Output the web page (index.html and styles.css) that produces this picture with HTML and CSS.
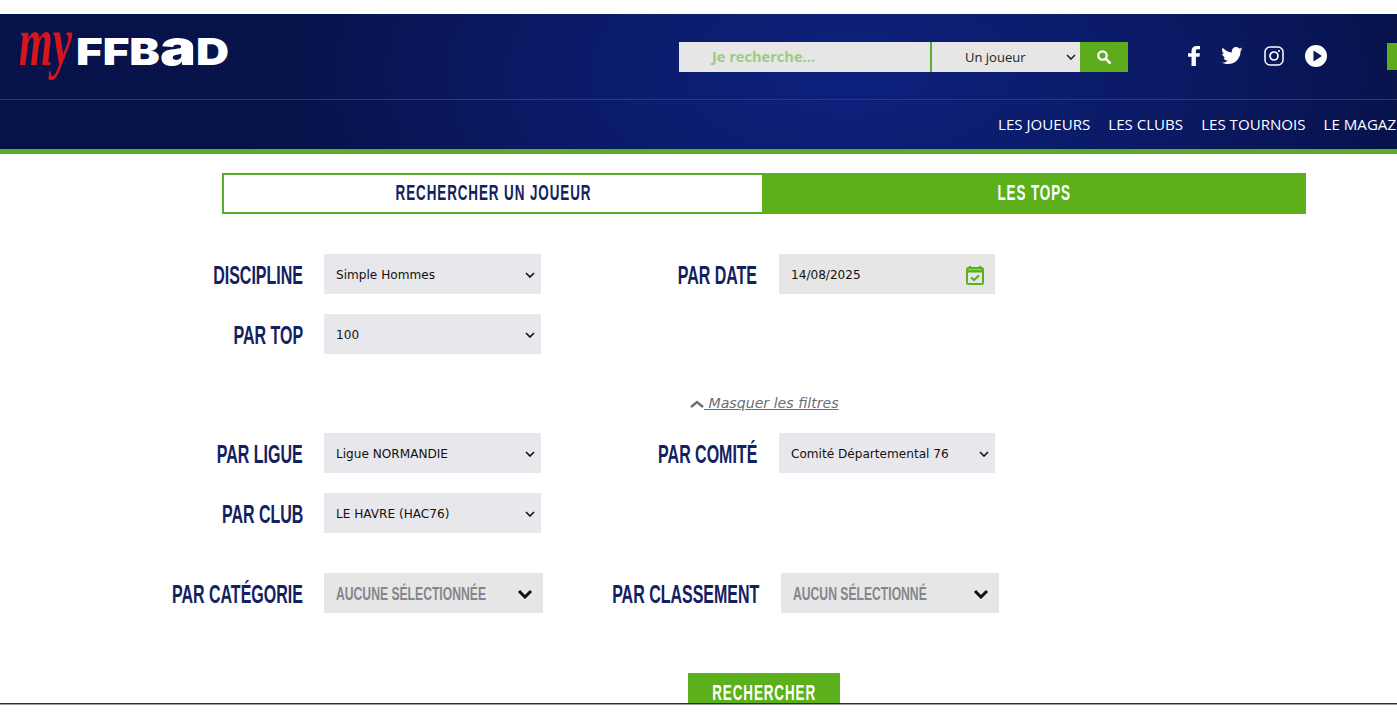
FILE: index.html
```html
<!DOCTYPE html>
<html>
<head>
  <title>MyFFBaD</title>
  <link rel="stylesheet" href="styles.css">
</head>
<body>

  <header class="site-header">
    <div class="header-top">
      <a class="logo" href="#">
        <span class="logo-my"><span>my</span></span>
        <span class="logo-name">FFB<span class="logo-a">a</span>D</span>
      </a>
      <form class="search-bar">
        <div class="search-input">Je recherche...</div>
        <div class="search-type">
          <span>Un joueur</span>
          <svg width="10" height="6" viewBox="0 0 10 6"><path d="M1 1l4 4 4-4" fill="none" stroke="#222" stroke-width="1.6"/></svg>
        </div>
        <div class="search-btn">
          <svg width="16" height="16" viewBox="0 0 16 16"><circle cx="6.5" cy="6.5" r="4.2" fill="none" stroke="#fff" stroke-width="2.2"/><path d="M9.8 9.8L14.5 14.5" stroke="#fff" stroke-width="2.6"/></svg>
        </div>
      </form>
      <div class="socials">
        <svg width="12" height="20" viewBox="1 .4 10.2 19.6" preserveAspectRatio="none"><path d="M4 20V11H1V7.6h3V5c0-3 1.800-4.600 4.500-4.600 1.300 0 2.400.1 2.700.1v3.100H9.400C8 3.600 7.700 4.300 7.700 5.300v2.300h3.500L10.700 11h-3v9z" fill="#fff"/></svg>
        <svg width="22" height="18" viewBox="0 0 24 20"><path d="M24 2.400c-.9.400-1.800.7-2.800.8 1-.6 1.800-1.600 2.200-2.700-1 .6-2 1-3.100 1.200C19.300.7 18 0 16.600 0c-2.700 0-4.900 2.200-4.900 4.900 0 .4 0 .8.100 1.100C7.700 5.800 4.100 3.900 1.700.9c-.4.700-.7 1.600-.7 2.500 0 1.700.9 3.200 2.200 4.100-.8 0-1.600-.2-2.200-.6v.1c0 2.400 1.700 4.400 3.900 4.800-.4.100-.8.200-1.300.2-.3 0-.6 0-.9-.1.600 2 2.400 3.400 4.600 3.400-1.700 1.300-3.800 2.100-6.100 2.100-.4 0-.8 0-1.200-.1C2.200 18.200 4.800 19 7.500 19c9.100 0 14-7.500 14-14v-.6c1-.7 1.800-1.500 2.500-2z" fill="#fff"/></svg>
        <svg width="20" height="20" viewBox="0 0 20 20"><rect x="1" y="1" width="18" height="18" rx="5" fill="none" stroke="#fff" stroke-width="1.500"/><circle cx="10" cy="10" r="4" fill="none" stroke="#fff" stroke-width="1.700"/><circle cx="15" cy="5" r="1.100" fill="#fff"/></svg>
        <svg width="22" height="22" viewBox="0 0 22 22"><circle cx="11" cy="11" r="11" fill="#fff"/><path d="M8.500 5.500v11l8.500-5.500z" fill="#0a1a5c"/></svg>
      </div>
      <div class="header-tab"></div>
    </div>
    <nav class="main-nav">
      <a href="#">LES JOUEURS</a>
      <a href="#">LES CLUBS</a>
      <a href="#">LES TOURNOIS</a>
      <a href="#">LE MAGAZINE</a>
    </nav>
  </header>

  <div class="tabs">
    <a class="tab" href="#"><span class="cond">RECHERCHER UN JOUEUR</span></a>
    <a class="tab tab-active" href="#"><span class="cond">LES TOPS</span></a>
  </div>

  <div class="filters">
    <div class="row">
      <div class="field">
        <label><span>DISCIPLINE</span></label>
        <div class="select">Simple Hommes<svg class="chev" viewBox="0 0 10 6"><path d="M1 1l4 4 4-4"/></svg></div>
      </div>
      <div class="field field-right">
        <label><span>PAR DATE</span></label>
        <div class="select select-date">14/08/2025
          <svg width="20" height="20" viewBox="0 0 20 20"><path d="M5 1v3M15 1v3" stroke="#5bb01c" stroke-width="2.400"/><rect x="2" y="3" width="16" height="16" rx="1.500" fill="none" stroke="#5bb01c" stroke-width="2"/><path d="M2 6h16" stroke="#5bb01c" stroke-width="3"/><path d="M6 12.500l3 2.500 5-4.500" fill="none" stroke="#5bb01c" stroke-width="2.200"/></svg>
        </div>
      </div>
    </div>
    <div class="row">
      <div class="field">
        <label><span>PAR TOP</span></label>
        <div class="select">100<svg class="chev" viewBox="0 0 10 6"><path d="M1 1l4 4 4-4"/></svg></div>
      </div>
    </div>

    <div class="toggle-filters">
      <svg width="14" height="8" viewBox="0 0 14 8"><path d="M1 7l6-5 6 5" fill="none" stroke="#6b6f78" stroke-width="2.400"/></svg>
      <a href="#">&nbsp;Masquer les filtres</a>
    </div>

    <div class="row">
      <div class="field">
        <label><span>PAR LIGUE</span></label>
        <div class="select">Ligue NORMANDIE<svg class="chev" viewBox="0 0 10 6"><path d="M1 1l4 4 4-4"/></svg></div>
      </div>
      <div class="field field-right">
        <label><span>PAR COMITÉ</span></label>
        <div class="select">Comité Départemental 76<svg class="chev" viewBox="0 0 10 6"><path d="M1 1l4 4 4-4"/></svg></div>
      </div>
    </div>
    <div class="row">
      <div class="field">
        <label><span>PAR CLUB</span></label>
        <div class="select">LE HAVRE (HAC76)<svg class="chev" viewBox="0 0 10 6"><path d="M1 1l4 4 4-4"/></svg></div>
      </div>
    </div>
    <div class="row row-multi">
      <div class="field">
        <label><span>PAR CATÉGORIE</span></label>
        <div class="select select-multi"><span>AUCUNE SÉLECTIONNÉE</span><svg class="chev-big" viewBox="0 0 16 10"><path d="M2 2l6 6 6-6"/></svg></div>
      </div>
      <div class="field field-right">
        <label><span>PAR CLASSEMENT</span></label>
        <div class="select select-multi"><span>AUCUN SÉLECTIONNÉ</span><svg class="chev-big" viewBox="0 0 16 10"><path d="M2 2l6 6 6-6"/></svg></div>
      </div>
    </div>

    <div class="submit-row">
      <a class="submit-btn" href="#"><span class="cond">RECHERCHER</span></a>
    </div>
  </div>

  <div class="page-edge"></div>

</body>
</html>
```

FILE: styles.css
```css
html, body {
  height: 100%;
}

body {
  margin: 0;
  padding-top: 14px;
  box-sizing: border-box;
  overflow: hidden;
  background: #fff;
  font-family: 'DejaVu Sans', sans-serif;
  position: relative;
}

a {
  text-decoration: none;
}

/* Header */
.site-header {
  height: 135px;
  border-bottom: 5px solid #5cac29;
  background:
    repeating-linear-gradient(90deg, rgba(255, 255, 255, 0.012) 0 1px, transparent 1px 4px),
    repeating-linear-gradient(0deg, rgba(0, 0, 0, 0.05) 0 1px, transparent 1px 4px),
    radial-gradient(ellipse 560px 300px at 850px 60px, #0c2080 0%, #0a1a68 55%, #06124c 100%);
  color: #fff;
}

.header-top {
  height: 85px;
  border-bottom: 1px solid #2e3a78;
  display: flex;
  align-items: flex-start;
  position: relative;
}

.logo {
  display: flex;
  align-items: baseline;
  margin: 0 0 0 19px;
  width: 660px;
  height: 56px;
  color: #fff;
}

.logo-my {
  display: block;
  width: 57px;
  font-family: 'Liberation Serif', serif;
  font-style: italic;
  font-weight: 700;
  font-size: 70px;
  line-height: 56px;
  color: #d9141f;
}

.logo-my span {
  display: inline-block;
  transform: scaleX(0.62);
  transform-origin: left center;
}

.logo-name {
  display: inline-block;
  font-family: 'Inter', sans-serif;
  font-weight: 900;
  font-size: 37px;
  line-height: 56px;
  white-space: nowrap;
  transform: scaleX(1.235);
  transform-origin: left center;
}

.logo-a {
  font-size: 49px;
  line-height: 0;
}

.search-bar {
  display: flex;
  margin: 28px 0 0 0;
  height: 30px;
}

.search-input {
  width: 218px;
  padding-left: 33px;
  background: #e6e6e6;
  color: #9ccb82;
  font-family: 'Open Sans', sans-serif;
  font-weight: 700;
  font-size: 14.6px;
  line-height: 29px;
}

.search-type {
  width: 150px;
  box-sizing: border-box;
  border-left: 2px solid #5cac29;
  background: #e6e6e6;
  color: #222;
  font-family: 'Open Sans', sans-serif;
  font-size: 13px;
  display: flex;
  align-items: center;
  justify-content: space-between;
  padding: 0 4px 0 33px;
}

.search-btn {
  width: 48px;
  background: #5cac1e;
  display: flex;
  align-items: center;
  justify-content: center;
}

.socials {
  display: flex;
  align-items: center;
  gap: 21px;
  margin: 31px 0 0 60px;
}

.header-tab {
  position: absolute;
  top: 29px;
  right: 0;
  width: 10px;
  height: 27px;
  background: #5cac1e;
}

.main-nav {
  display: flex;
  gap: 18px;
  padding: 14px 0 0 998px;
  white-space: nowrap;
  font-family: 'Open Sans', sans-serif;
  font-size: 15.1px;
}

.main-nav a {
  color: #fff;
  line-height: 20px;
}

/* Tabs */
.tabs {
  display: flex;
  width: 1084px;
  height: 41px;
  margin: 19px 0 0 222px;
  font-family: 'Liberation Sans', sans-serif;
  font-weight: 700;
  font-size: 22px;
  letter-spacing: 1.5px;
  white-space: nowrap;
}

.cond {
  display: inline-block;
  flex: none;
  transform: scaleX(0.61);
}

.tab {
  width: 540px;
  box-sizing: border-box;
  border: 2px solid #5cac29;
  border-right: none;
  padding-bottom: 2px;
  color: #14215f;
  display: flex;
  align-items: center;
  justify-content: center;
}

.tab-active {
  width: auto;
  flex: 1;
  background: #5cb01c;
  border: none;
  color: #fff;
}

/* Filters */
.filters {
  margin-top: 40px;
  font-size: 12.1px;
}

.row {
  display: flex;
  height: 40px;
  margin-bottom: 20px;
}

.field {
  display: flex;
  align-items: center;
  flex: none;
  width: 541px;
}

.field label {
  display: flex;
  justify-content: flex-end;
  flex: none;
  width: 324px;
  padding: 2px 21px 0 0;
  box-sizing: border-box;
  white-space: nowrap;
  color: #14215f;
  font-family: 'Liberation Sans', sans-serif;
  font-weight: 700;
  font-size: 26px;
}

.field label span {
  display: inline-block;
  flex: none;
  transform: scaleX(0.615);
  transform-origin: right center;
}

.field-right {
  width: auto;
}

.field-right label {
  width: 238px;
  padding-right: 22px;
}

.select {
  width: 217px;
  height: 40px;
  box-sizing: border-box;
  padding: 1px 6px 0 12px;
  background: #e8e8ec;
  color: #111;
  display: flex;
  align-items: center;
  justify-content: space-between;
  white-space: nowrap;
  flex: none;
}

.field-right .select {
  width: 216px;
}

.select-date {
  background: #e6e6e6;
  padding-right: 10px;
}

.chev {
  width: 10px;
  height: 6px;
  fill: none;
  stroke: #111;
  stroke-width: 1.6;
}

.toggle-filters {
  margin: 40px 0 0 690px;
  height: 39px;
  color: #6b6f78;
  font-family: 'DejaVu Sans', sans-serif;
  font-size: 14.15px;
  font-style: italic;
  display: flex;
  align-items: baseline;
  line-height: 18px;
}

.toggle-filters a {
  color: #6b6f78;
  text-decoration: underline;
}

.row-multi {
  margin-top: 40px;
}

.row-multi .select-multi {
  width: 219px;
  background: #e6e6e6;
  color: #85868c;
  font-family: 'Liberation Sans', sans-serif;
  font-weight: 700;
  font-size: 19px;
  padding-right: 10px;
}

.row-multi .field-right label {
  width: 240px;
}

.row-multi .field-right .select-multi {
  width: 218px;
}

.select-multi span {
  flex: 1;
  min-width: 0;
  transform: scaleX(0.64);
  transform-origin: left center;
}

.chev-big {
  flex: none;
  width: 16px;
  height: 10px;
  fill: none;
  stroke: #111;
  stroke-width: 3;
}

.submit-row {
  margin: 60px 0 0 688px;
}

.submit-btn {
  display: flex;
  align-items: center;
  justify-content: center;
  width: 152px;
  height: 40px;
  background: #5cb01c;
  color: #fff;
  white-space: nowrap;
  font-family: 'Liberation Sans', sans-serif;
  font-weight: 700;
  font-size: 22px;
  letter-spacing: 1.5px;
}

.page-edge {
  position: absolute;
  left: 0;
  right: 0;
  top: 703px;
  bottom: 0;
  background: linear-gradient(#9a9da3, #9a9da3) top / 100% 1px no-repeat #fff;
  border-top: 1px solid #2b2d33;
}
```
